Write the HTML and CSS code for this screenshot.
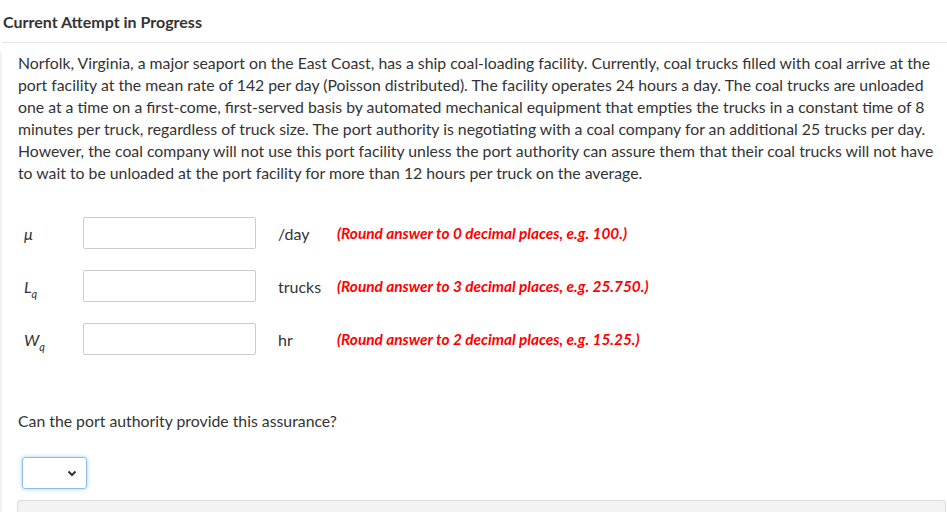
FILE: index.html
```html
<!DOCTYPE html>
<html>
<head>
<meta charset="utf-8">
<link rel="stylesheet" href="styles.css">
</head>
<body>
<div class="header">Current Attempt in Progress</div>
<div class="main">
  <p class="problem">Norfolk, Virginia, a major seaport on the East Coast, has a ship coal-loading facility. Currently, coal trucks filled with coal arrive at the port facility at the mean rate of 142 per day (Poisson distributed). The facility operates 24 hours a day. The coal trucks are unloaded one at a time on a first-come, first-served basis by automated mechanical equipment that empties the trucks in a constant time of 8 minutes per truck, regardless of truck size. The port authority is negotiating with a coal company for an additional 25 trucks per day. However, the coal company will not use this port facility unless the port authority can assure them that their coal trucks will not have to wait to be unloaded at the port facility for more than 12 hours per truck on the average.</p>
  <div class="rows">
    <div class="row">
      <span class="label">μ</span>
      <input class="answer" type="text">
      <span class="unit">/day</span>
      <span class="hint">(Round answer to 0 decimal places, e.g. 100.)</span>
    </div>
    <div class="row">
      <span class="label">L<sub>q</sub></span>
      <input class="answer" type="text">
      <span class="unit">trucks</span>
      <span class="hint">(Round answer to 3 decimal places, e.g. 25.750.)</span>
    </div>
    <div class="row">
      <span class="label">W<sub>q</sub></span>
      <input class="answer" type="text">
      <span class="unit">hr</span>
      <span class="hint">(Round answer to 2 decimal places, e.g. 15.25.)</span>
    </div>
  </div>
  <p class="question">Can the port authority provide this assurance?</p>
  <div class="select-wrap">
    <div class="select">
      <svg class="chev" width="10" height="7" viewBox="0 0 10 7"><path d="M1.5 1.5 L5 5 L8.5 1.5" fill="none" stroke="#333" stroke-width="2"/></svg>
    </div>
  </div>
  <div class="footer-box"></div>
</div>
</body>
</html>
```
FILE: styles.css
```css
* { box-sizing: border-box; }
html, body { margin: 0; padding: 0; background: #fff; }
body {
  font-family: Lato, "Open Sans", sans-serif;
  color: #333;
  font-size: 16px;
  width: 947px;
  height: 512px;
  overflow: hidden;
}
.header {
  height: 43px;
  padding: 12px 0 0 1px;
  margin-left: 2px;
  font-weight: 700;
  font-size: 16px;
  line-height: 20px;
  border-bottom: 1px solid #e6e6e6;
}
.main {
  border-left: 2px solid #f2f2f2;
  padding: 0 0 0 16px;
}
.problem {
  margin: 9px 0 0 0;
  width: 922px;
  font-size: 15.8px;
  line-height: 22px;
  color: #333;
}
.rows {
  margin-top: 33px;
  display: flex;
  flex-direction: column;
  gap: 21px;
}
.row {
  display: flex;
  align-items: center;
  height: 32px;
}
.label {
  width: 65px;
  padding-left: 6px;
  font-style: italic;
  font-size: 16px;
}
.label sub {
  font-size: 11px;
  vertical-align: -5px;
  line-height: 0;
}
.answer {
  width: 173px;
  height: 32px;
  border: 1px solid #ccc;
  border-radius: 2px;
  margin: 0;
  padding: 0;
  background: #fff;
}
.unit {
  width: 59px;
  margin-left: 22px;
  font-size: 16px;
}
.hint {
  color: #f00;
  font-style: italic;
  font-weight: 700;
  font-size: 15.4px;
}
.question {
  margin: 55px 0 0 0;
  font-size: 15.8px;
  line-height: 22px;
}
.select-wrap {
  margin-top: 25px;
  padding-left: 4px;
}
.select {
  width: 65px;
  height: 32px;
  border: 1px solid #8ebde8;
  border-radius: 3px;
  box-shadow: 0 0 4px rgba(102, 175, 233, 0.6);
  display: flex;
  align-items: center;
  justify-content: flex-end;
  padding-right: 9px;
}
.footer-box {
  margin-top: 11px;
  margin-left: -1px;
  width: 929px;
  height: 30px;
  background: #f3f3f3;
  border: 1px solid #dcdcdc;
  border-radius: 3px;
}
```
